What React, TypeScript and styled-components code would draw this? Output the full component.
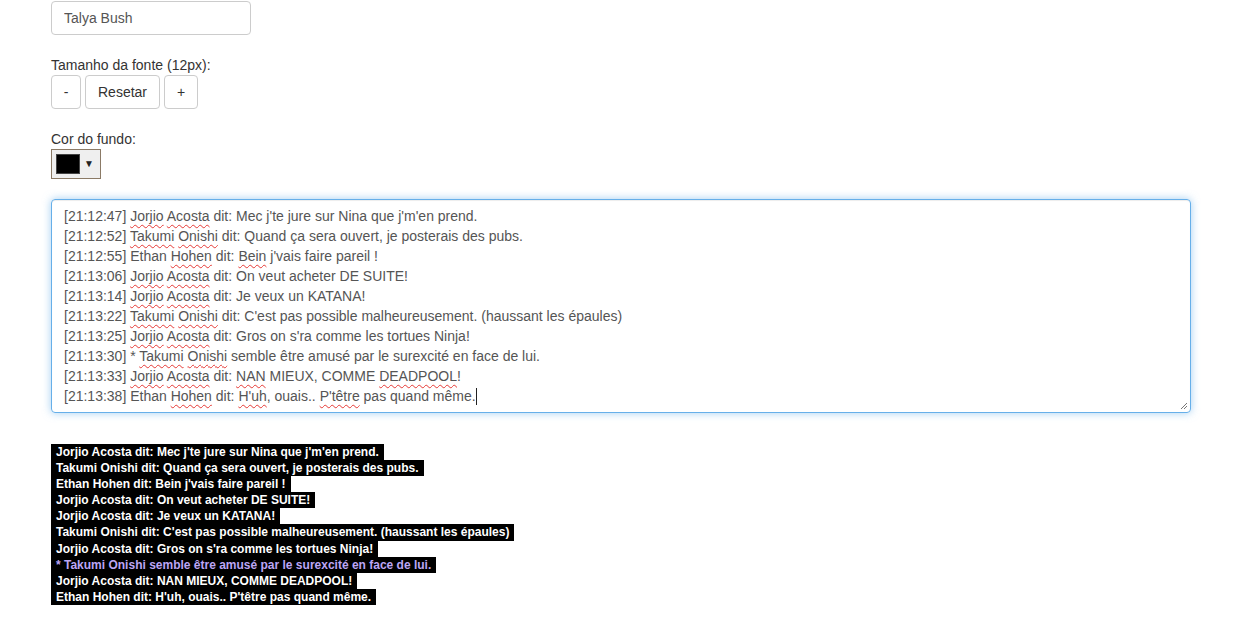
import React from "react";
import styled, { createGlobalStyle } from "styled-components";

const GlobalStyle = createGlobalStyle`
  html, body {
    margin: 0;
    padding: 0;
    background: #fff;
    font-family: "Liberation Sans", Arial, sans-serif;
    font-size: 14px;
    color: #333;
  }
`;

const Page = styled.div`
  padding: 1px 0 0 51px;
  width: 1140px;
`;

const Field = styled.div`
  display: flex;
  flex-direction: column;
  align-items: flex-start;
  margin-bottom: 20px;
`;

const NameInput = styled.input`
  box-sizing: border-box;
  width: 200px;
  height: 34px;
  padding: 6px 12px;
  border: 1px solid #ccc;
  border-radius: 4px;
  font-family: inherit;
  font-size: 14px;
  color: #555;
  outline: none;
`;

const Label = styled.label`
  display: block;
  line-height: 20px;
  color: #333;
`;

const ButtonRow = styled.div`
  display: flex;
  gap: 4px;
`;

const SizeButton = styled.button<{ $w: number }>`
  box-sizing: border-box;
  width: ${(p) => p.$w}px;
  height: 34px;
  padding: 0;
  background: #fff;
  border: 1px solid #ccc;
  border-radius: 4px;
  font-family: inherit;
  font-size: 14px;
  color: #333;
  cursor: pointer;
`;

const ColorPick = styled.button`
  box-sizing: border-box;
  display: flex;
  align-items: center;
  gap: 4px;
  width: 50px;
  height: 30px;
  padding: 0 0 0 4px;
  background: #efefef;
  border: 1px solid #8b7a66;
  border-radius: 0;
  cursor: pointer;
`;

const Swatch = styled.span<{ $c: string }>`
  display: block;
  width: 24px;
  height: 20px;
  box-sizing: border-box;
  background: ${(p) => p.$c};
  border: 1px solid #444;
`;

const Arrow = styled.span`
  font-size: 10px;
  color: #222;
  line-height: 1;
`;

const LogBox = styled.div`
  position: relative;
  box-sizing: border-box;
  width: 1140px;
  margin-top: 20px;
  padding: 6px 12px;
  border: 1px solid #66afe9;
  border-radius: 4px;
  box-shadow: inset 0 1px 1px rgba(0, 0, 0, 0.075), 0 0 8px rgba(102, 175, 233, 0.6);
  color: #555;
  line-height: 20px;
  font-size: 14px;
`;

const LogLine = styled.div`
  white-space: pre;
`;

const Misspelled = styled.span`
  text-decoration: underline wavy #e53935;
  text-decoration-thickness: 1px;
  text-underline-offset: 3px;
`;

const Caret = styled.span`
  display: inline-block;
  width: 1px;
  height: 17px;
  background: #222;
  vertical-align: -4px;
`;

const Grip = styled.svg`
  position: absolute;
  right: 2px;
  bottom: 2px;
`;

const Output = styled.div`
  margin-top: 31px;
  display: flex;
  flex-direction: column;
  align-items: flex-start;
`;

const OutLine = styled.div<{ $emote?: boolean }>`
  background: #000;
  color: ${(p) => (p.$emote ? "#bca6f5" : "#fff")};
  font-weight: bold;
  font-size: 12px;
  line-height: 16.1px;
  padding: 0 5px 0 5px;
  white-space: pre;
`;

// ~word~ marks a word flagged by the spell checker
const log = [
  "[21:12:47] ~Jorjio~ ~Acosta~ dit: Mec j'te jure sur Nina que j'm'en prend.",
  "[21:12:52] ~Takumi~ ~Onishi~ dit: Quand ça sera ouvert, je posterais des pubs.",
  "[21:12:55] Ethan ~Hohen~ dit: ~Bein~ j'vais faire pareil !",
  "[21:13:06] ~Jorjio~ ~Acosta~ dit: On veut acheter DE SUITE!",
  "[21:13:14] ~Jorjio~ ~Acosta~ dit: Je veux un KATANA!",
  "[21:13:22] ~Takumi~ ~Onishi~ dit: C'est pas possible malheureusement. (haussant les épaules)",
  "[21:13:25] ~Jorjio~ ~Acosta~ dit: Gros on s'ra comme les tortues Ninja!",
  "[21:13:30] * ~Takumi~ ~Onishi~ semble être amusé par le surexcité en face de lui.",
  "[21:13:33] ~Jorjio~ ~Acosta~ dit: ~NAN~ MIEUX, COMME ~DEADPOOL~!",
  "[21:13:38] Ethan ~Hohen~ dit: ~H'uh~, ouais.. ~P'têtre~ pas quand même.",
];

const renderLine = (line: string) =>
  line.split("~").map((part, i) =>
    i % 2 === 1 ? <Misspelled key={i}>{part}</Misspelled> : <React.Fragment key={i}>{part}</React.Fragment>
  );

const cleaned = log.map((l) => l.replace(/~/g, "").replace(/^\[[^\]]+\] /, ""));

export default function App() {
  return (
    <Page>
      <GlobalStyle />
      <Field>
        <NameInput defaultValue="Talya Bush" />
      </Field>
      <Field>
        <Label>Tamanho da fonte (12px):</Label>
        <ButtonRow>
          <SizeButton $w={30}>-</SizeButton>
          <SizeButton $w={75}>Resetar</SizeButton>
          <SizeButton $w={34}>+</SizeButton>
        </ButtonRow>
      </Field>
      <Field>
        <Label>Cor do fundo:</Label>
        <ColorPick>
          <Swatch $c="#000" />
          <Arrow>▼</Arrow>
        </ColorPick>
      </Field>
      <LogBox>
        {log.map((l, i) => (
          <LogLine key={i}>
            {renderLine(l)}
            {i === log.length - 1 && <Caret />}
          </LogLine>
        ))}
        <Grip width="10" height="10" viewBox="0 0 10 10">
          <path d="M9 3 L3 9 M9 6 L6 9" stroke="#777" strokeWidth="1" />
        </Grip>
      </LogBox>
      <Output>
        {cleaned.map((l, i) => (
          <OutLine key={i} $emote={l.startsWith("*")}>
            {l}
          </OutLine>
        ))}
      </Output>
    </Page>
  );
}
